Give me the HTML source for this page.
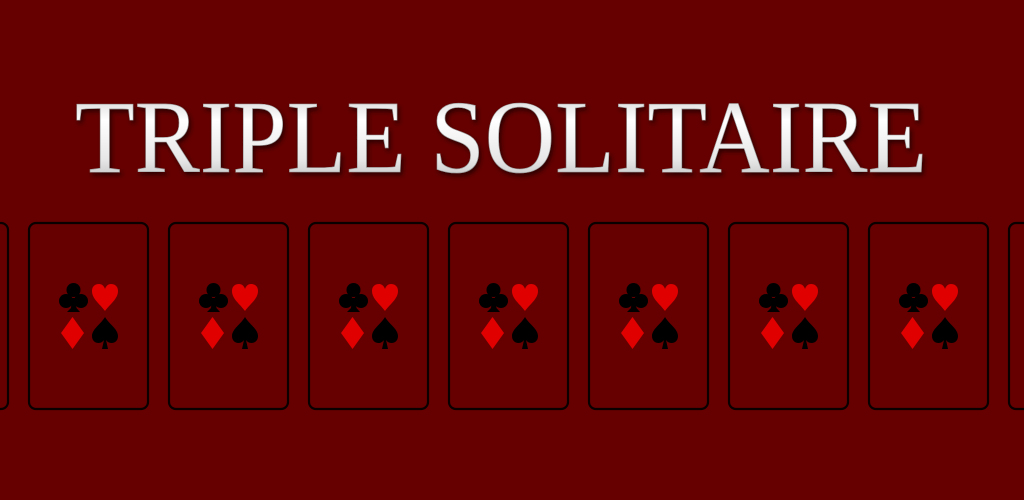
<!DOCTYPE html>
<html><head><meta charset="utf-8"><style>
html,body{margin:0;padding:0;background:#660000;width:1024px;height:500px;overflow:hidden}
</style></head><body>
<svg width="1024" height="500" viewBox="0 0 1024 500" xmlns="http://www.w3.org/2000/svg">
<defs>
<linearGradient id="g" x1="0" y1="0" x2="0" y2="1">
<stop offset="0" stop-color="#bdbdbd"/><stop offset="0.35" stop-color="#ffffff"/><stop offset="0.7" stop-color="#e6e6e6"/><stop offset="1" stop-color="#a8a8a8"/>
</linearGradient>
<filter id="sh" x="-5%" y="-20%" width="110%" height="140%"><feDropShadow dx="2" dy="3" stdDeviation="2" flood-color="#200000" flood-opacity="0.8"/></filter>
<g id="card">
<rect x="1" y="1" width="119" height="186" rx="7" fill="#660000" stroke="#0a0000" stroke-width="2.2"/>
<g fill="#000">
<circle cx="45.5" cy="68" r="7"/><circle cx="38" cy="79" r="7"/><circle cx="53" cy="79" r="7"/>
<path d="M44 76 L47 76 L48.5 86 L52 90 L39 90 L43 86 Z"/>
</g>
<path fill="#e00000" d="M77 89 C72 82 64 77 64 69 C64 64 67.5 62 71 62 C74 62 76 64 77 67 C78 64 80 62 83 62 C86.5 62 90 64 90 69 C90 77 82 82 77 89 Z"/>
<path fill="#e00000" d="M44.5 95 L56 111 L44.5 127 L33 111 Z"/>
<path fill="#000" d="M77 95 C73 102 64 107 64 114 C64 119 67.5 121 70.5 121 C73 121 75 119.5 76 118 L74 127 L80 127 L78 118 C79 119.5 81 121 83.5 121 C86.5 121 90 119 90 114 C90 107 81 102 77 95 Z"/>
</g>
</defs>
<use href="#card" x="-112" y="222"/>
<use href="#card" x="28" y="222"/>
<use href="#card" x="168" y="222"/>
<use href="#card" x="308" y="222"/>
<use href="#card" x="448" y="222"/>
<use href="#card" x="588" y="222"/>
<use href="#card" x="728" y="222"/>
<use href="#card" x="868" y="222"/>
<use href="#card" x="1008" y="222"/>
<text x="75" y="172" textLength="852" lengthAdjust="spacingAndGlyphs" font-family="Liberation Serif, serif" font-size="104" fill="url(#g)" stroke="#9a9a9a" stroke-width="0.6" filter="url(#sh)">TRIPLE SOLITAIRE</text>
</svg>
</body></html>
